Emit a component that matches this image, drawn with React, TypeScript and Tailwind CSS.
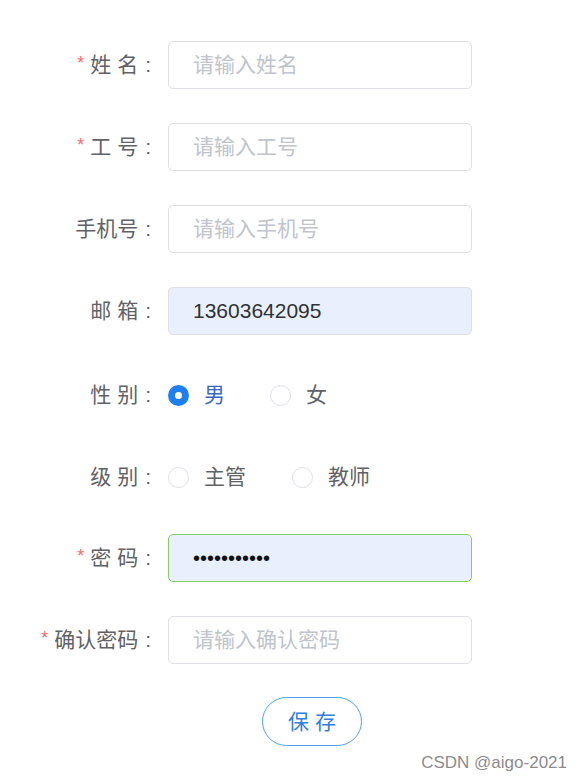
const font = { fontFamily: '"Liberation Sans", "Noto Sans CJK SC", sans-serif' };

function Label({ text, required }: { text: string; required?: boolean }) {
  return (
    <div className="w-[168px] shrink-0 flex justify-end items-center pr-[17px] text-[21px] text-[#606266]">
      {required && <span className="text-[#f56c6c] text-[18px] mr-[6px] -mt-1">*</span>}
      <span>{text}</span>
      <span className="ml-[7px]">:</span>
    </div>
  );
}

function Field({ placeholder, value, filled, ok, password }: { placeholder: string; value?: string; filled?: boolean; ok?: boolean; password?: boolean }) {
  const border = ok ? "border-[#83cf63]" : "border-[#dcdfe6]";
  const bg = filled ? "bg-[#e8f0fe]" : "bg-white";
  return (
    <div className={`w-[304px] h-[48px] rounded-[5px] border ${border} ${bg} flex items-center pl-6`}>
      {value ? (
        <span className={password ? "text-[#111] text-[20px]" : "text-[#303133] text-[21px]"}>{value}</span>
      ) : (
        <span className="text-[#c0c4cc] text-[21px]">{placeholder}</span>
      )}
    </div>
  );
}

function Radio({ label, checked, gap }: { label: string; checked?: boolean; gap: string }) {
  return (
    <div className={`flex items-center ${gap}`}>
      {checked ? (
        <span className="w-[21px] h-[21px] rounded-full bg-[#1f7ff0] flex items-center justify-center">
          <span className="w-[7px] h-[7px] rounded-full bg-white" />
        </span>
      ) : (
        <span className="w-[21px] h-[21px] rounded-full border border-[#dcdfe6] bg-white" />
      )}
      <span className={`ml-[15px] text-[21px] ${checked ? "text-[#3b66c4]" : "text-[#606266]"}`}>{label}</span>
    </div>
  );
}

function Row({ children }: { children: React.ReactNode }) {
  return <div className="flex items-center h-[48px]">{children}</div>;
}

export default function App() {
  return (
    <div className="relative w-[582px] h-[782px] bg-white" style={font}>
      <div className="flex flex-col gap-[34px] pt-[41px]">
        <Row>
          <Label text="姓 名" required />
          <Field placeholder="请输入姓名" />
        </Row>
        <Row>
          <Label text="工 号" required />
          <Field placeholder="请输入工号" />
        </Row>
        <Row>
          <Label text="手机号" />
          <Field placeholder="请输入手机号" />
        </Row>
        <Row>
          <Label text="邮 箱" />
          <Field placeholder="" value="13603642095" filled />
        </Row>
        <div className="flex items-center h-[48px] mt-[2px]">
          <Label text="性 别" />
          <Radio label="男" checked gap="mr-[45px]" />
          <Radio label="女" gap="" />
        </div>
        <Row>
          <Label text="级 别" />
          <Radio label="主管" gap="mr-[46px]" />
          <Radio label="教师" gap="" />
        </Row>
        <div className="flex items-center h-[48px] -mt-[1px]">
          <Label text="密 码" required />
          <Field placeholder="" value="•••••••••••" filled ok password />
        </div>
        <Row>
          <Label text="确认密码" required />
          <Field placeholder="请输入确认密码" />
        </Row>
        <div className="flex pl-[262px] -mt-[1px]">
          <button className="w-[100px] h-[49px] rounded-full border border-[#4b9ff5] bg-white text-[21px] text-[#2f7ee0]">
            保 存
          </button>
        </div>
      </div>
      <div className="absolute right-[15px] bottom-[7px] text-[17px] text-[#8c8c8c]">CSDN @aigo-2021</div>
    </div>
  );
}
